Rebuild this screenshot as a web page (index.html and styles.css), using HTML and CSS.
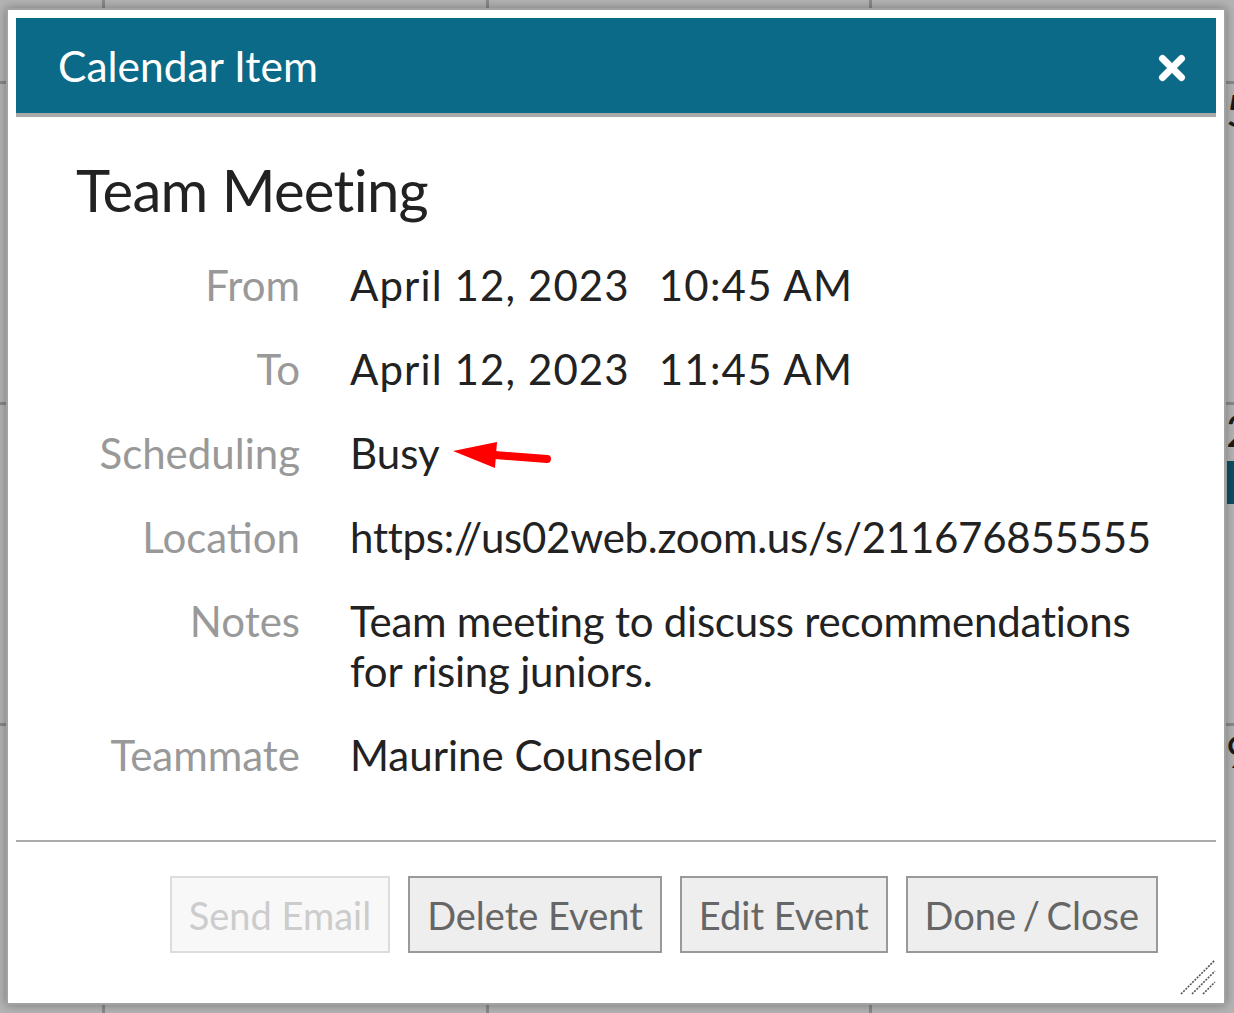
FILE: index.html
```html
<!DOCTYPE html>
<html lang="en">
<head>
<meta charset="utf-8">
<title>Calendar Item</title>
<link rel="stylesheet" href="styles.css">
</head>
<body>
<div class="backdrop">
  <span class="bg-digit d1">5</span>
  <span class="bg-digit d2">2</span>
  <span class="bg-event"></span>
  <span class="bg-digit d3">9</span>
</div>
<div class="dialog">
  <div class="dialog-header">
    <h1 class="dialog-title">Calendar Item</h1>
    <button class="close-btn" aria-label="Close">
      <svg width="28" height="28" viewBox="0 0 28 28"><path d="M4.5 4.5 L23.5 23.5 M23.5 4.5 L4.5 23.5" stroke="#fff" stroke-width="7" stroke-linecap="round"/></svg>
    </button>
  </div>
  <div class="dialog-body">
    <h2 class="event-title">Team Meeting</h2>
    <div class="details">
      <div class="label">From</div>
      <div class="value"><span class="date">April 12, 2023</span><span class="time">10:45 AM</span></div>
      <div class="label">To</div>
      <div class="value"><span class="date">April 12, 2023</span><span class="time">11:45 AM</span></div>
      <div class="label">Scheduling</div>
      <div class="value busy">Busy
        <svg class="arrow" width="104" height="34" viewBox="0 0 104 34"><path d="M0 13 L44 4 L42 30 Z" fill="#f00"/><path d="M42 17 L94 21" stroke="#f00" stroke-width="8" stroke-linecap="round"/></svg>
      </div>
      <div class="label">Location</div>
      <div class="value url">https://us02web.zoom.us/s/211676855555</div>
      <div class="label">Notes</div>
      <div class="value notes">Team meeting to discuss recommendations<br>for rising juniors.</div>
      <div class="label">Teammate</div>
      <div class="value">Maurine Counselor</div>
    </div>
  </div>
  <div class="dialog-footer">
    <button class="btn disabled">Send Email</button>
    <button class="btn">Delete Event</button>
    <button class="btn">Edit Event</button>
    <button class="btn btn-tight">Done / Close</button>
  </div>
  <svg class="grip" width="36" height="36" viewBox="0 0 36 36"><g stroke="#555" stroke-width="1.6" stroke-dasharray="2 1.2"><path d="M1 35 L35 1"/><path d="M12 35 L35 12"/><path d="M23 35 L35 23"/></g></svg>
</div>
</body>
</html>
```
FILE: styles.css
```css
* { box-sizing: border-box; }
html, body { margin: 0; padding: 0; }
body {
  width: 1234px;
  height: 1013px;
  overflow: hidden;
  position: relative;
  font-family: Lato, "Open Sans", sans-serif;
  background-color: #b4b4b4;
  background-image:
    linear-gradient(#8a8a8a, #8a8a8a),
    linear-gradient(#8a8a8a, #8a8a8a),
    linear-gradient(#8a8a8a, #8a8a8a);
  background-repeat: repeat-x, repeat-x, repeat-x;
  background-size: 100% 3px;
  background-position: 0 81px, 0 402px, 0 723px;
  padding: 8px 0 0 6px;
}
.backdrop {
  position: absolute;
  inset: 0;
  background-image:
    linear-gradient(#8a8a8a, #8a8a8a),
    linear-gradient(#8a8a8a, #8a8a8a),
    linear-gradient(#8a8a8a, #8a8a8a);
  background-repeat: repeat-y;
  background-size: 3px 100%;
  background-position: 102px 0, 486px 0, 869px 0;
}
.bg-digit {
  position: absolute;
  left: 1226px;
  font-size: 44px;
  line-height: 1;
  color: #1a1a1a;
}
.d1 { top: 88px; }
.d2 { top: 408px; }
.d3 { top: 729px; }
.bg-event {
  position: absolute;
  left: 1227px;
  top: 461px;
  width: 20px;
  height: 43px;
  background: #0b4f66;
}
.dialog {
  position: relative;
  width: 1220px;
  height: 997px;
  background: #fff;
  border: 2px solid #a2a2a2;
  box-shadow: 0 0 10px rgba(0,0,0,0.35);
  padding: 8px 8px 0 8px;
  display: flex;
  flex-direction: column;
}
.dialog-header {
  height: 99px;
  background: #0b6a87;
  border-bottom: 4px solid #a9a9a9;
  display: flex;
  align-items: center;
  justify-content: space-between;
  padding: 0 30px 0 42px;
  flex: none;
}
.dialog-title {
  margin: 0;
  color: #fff;
  font-weight: 400;
  font-size: 42.5px;
  line-height: 1;
  position: relative;
  top: 1px;
}
.close-btn {
  background: none;
  border: 0;
  padding: 0;
  width: 28px;
  height: 28px;
  display: flex;
  cursor: pointer;
  margin-top: 4px;
}
.dialog-body {
  flex: 1;
  border-bottom: 2px solid #ababab;
}
.event-title {
  margin: 38px 0 0 60px;
  font-weight: 400;
  font-size: 58px;
  letter-spacing: -0.7px;
  line-height: 70px;
  color: #222;
}
.details {
  margin-top: 35px;
  display: grid;
  grid-template-columns: 284px 1fr;
  column-gap: 50px;
  row-gap: 34px;
  font-size: 42px;
  line-height: 50px;
}
.label {
  text-align: right;
  color: #999;
}
.value {
  color: #222;
}
.date {
  display: inline-block;
  letter-spacing: 1.1px;
  margin-right: 29px;
}
.time {
  letter-spacing: 1.2px;
}
.url { letter-spacing: -0.26px; }
.notes { letter-spacing: -0.23px; }
.busy {
  display: flex;
  align-items: center;
}
.arrow {
  margin-left: 13px;
  margin-top: 4px;
}
.dialog-footer {
  flex: none;
  height: 161px;
  display: flex;
  justify-content: flex-end;
  align-items: flex-start;
  gap: 18px;
  padding: 34px 58px 0 0;
}
.btn {
  height: 77px;
  padding: 0 17px;
  font-family: inherit;
  font-size: 38px;
  color: #666;
  background: #eee;
  border: 2px solid #999;
  border-radius: 0;
}
.btn.disabled {
  color: #ccc;
  background: #f8f8f8;
  border-color: #ddd;
}
.btn-tight { word-spacing: -3px; }
.grip {
  position: absolute;
  right: 8px;
  bottom: 8px;
}
```
